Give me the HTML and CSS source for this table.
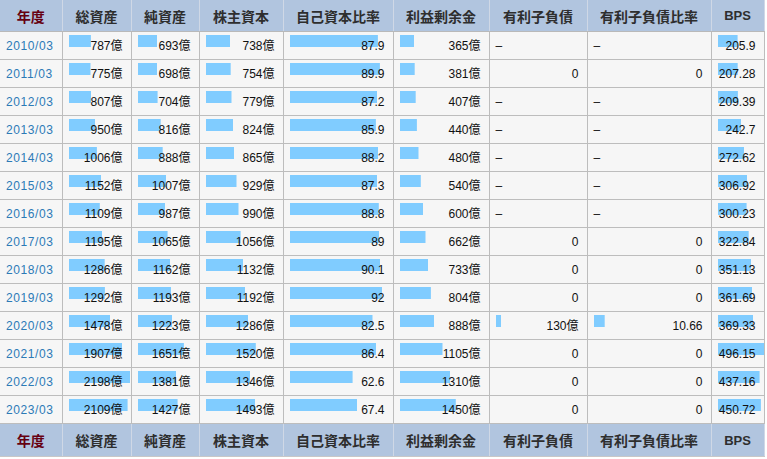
FILE: index.html
```html
<!DOCTYPE html>
<html lang="ja">
<head>
<meta charset="utf-8">
<title>財務推移</title>
<link rel="stylesheet" href="styles.css">
</head>
<body>
<table class="fin">
<colgroup>
<col class="c-year"><col class="c-ta"><col class="c-na"><col class="c-eq"><col class="c-ratio"><col class="c-re"><col class="c-debt"><col class="c-dr"><col class="c-bps">
</colgroup>
<thead>
<tr><th class="h-year">年度</th><th>総資産</th><th>純資産</th><th>株主資本</th><th>自己資本比率</th><th>利益剰余金</th><th>有利子負債</th><th>有利子負債比率</th><th class="h-bps">BPS</th></tr>
</thead>
<tbody>
<tr><td class="year"><a href="#">2010/03</a></td><td class="bar" style="--w:21.9px">787億</td><td class="bar" style="--w:19.3px">693億</td><td class="bar" style="--w:24.2px">738億</td><td class="bar" style="--w:87.9px">87.9</td><td class="bar" style="--w:14px">365億</td><td class="dash">–</td><td class="dash">–</td><td class="bar" style="--w:19.6px">205.9</td></tr>
<tr><td class="year"><a href="#">2011/03</a></td><td class="bar" style="--w:21.5px">775億</td><td class="bar" style="--w:19.4px">698億</td><td class="bar" style="--w:24.7px">754億</td><td class="bar" style="--w:89.9px">89.9</td><td class="bar" style="--w:14.7px">381億</td><td class="num">0</td><td class="num">0</td><td class="bar" style="--w:19.7px">207.28</td></tr>
<tr><td class="year"><a href="#">2012/03</a></td><td class="bar" style="--w:22.4px">807億</td><td class="bar" style="--w:19.6px">704億</td><td class="bar" style="--w:25.5px">779億</td><td class="bar" style="--w:87.2px">87.2</td><td class="bar" style="--w:15.7px">407億</td><td class="dash">–</td><td class="dash">–</td><td class="bar" style="--w:19.9px">209.39</td></tr>
<tr><td class="year"><a href="#">2013/03</a></td><td class="bar" style="--w:26.4px">950億</td><td class="bar" style="--w:22.7px">816億</td><td class="bar" style="--w:27px">824億</td><td class="bar" style="--w:85.9px">85.9</td><td class="bar" style="--w:16.9px">440億</td><td class="dash">–</td><td class="dash">–</td><td class="bar" style="--w:23.1px">242.7</td></tr>
<tr><td class="year"><a href="#">2014/03</a></td><td class="bar" style="--w:27.9px">1006億</td><td class="bar" style="--w:24.7px">888億</td><td class="bar" style="--w:28.4px">865億</td><td class="bar" style="--w:88.2px">88.2</td><td class="bar" style="--w:18.5px">480億</td><td class="dash">–</td><td class="dash">–</td><td class="bar" style="--w:26px">272.62</td></tr>
<tr><td class="year"><a href="#">2015/03</a></td><td class="bar" style="--w:32px">1152億</td><td class="bar" style="--w:28px">1007億</td><td class="bar" style="--w:30.5px">929億</td><td class="bar" style="--w:87.3px">87.3</td><td class="bar" style="--w:20.8px">540億</td><td class="dash">–</td><td class="dash">–</td><td class="bar" style="--w:29.2px">306.92</td></tr>
<tr><td class="year"><a href="#">2016/03</a></td><td class="bar" style="--w:30.8px">1109億</td><td class="bar" style="--w:27.4px">987億</td><td class="bar" style="--w:32.5px">990億</td><td class="bar" style="--w:88.8px">88.8</td><td class="bar" style="--w:23.1px">600億</td><td class="dash">–</td><td class="dash">–</td><td class="bar" style="--w:28.6px">300.23</td></tr>
<tr><td class="year"><a href="#">2017/03</a></td><td class="bar" style="--w:33.2px">1195億</td><td class="bar" style="--w:29.6px">1065億</td><td class="bar" style="--w:34.6px">1056億</td><td class="bar" style="--w:89px">89</td><td class="bar" style="--w:25.5px">662億</td><td class="num">0</td><td class="num">0</td><td class="bar" style="--w:30.7px">322.84</td></tr>
<tr><td class="year"><a href="#">2018/03</a></td><td class="bar" style="--w:35.7px">1286億</td><td class="bar" style="--w:32.3px">1162億</td><td class="bar" style="--w:37.1px">1132億</td><td class="bar" style="--w:90.1px">90.1</td><td class="bar" style="--w:28.2px">733億</td><td class="num">0</td><td class="num">0</td><td class="bar" style="--w:33.4px">351.13</td></tr>
<tr><td class="year"><a href="#">2019/03</a></td><td class="bar" style="--w:35.9px">1292億</td><td class="bar" style="--w:33.1px">1193億</td><td class="bar" style="--w:39.1px">1192億</td><td class="bar" style="--w:92px">92</td><td class="bar" style="--w:30.9px">804億</td><td class="num">0</td><td class="num">0</td><td class="bar" style="--w:34.4px">361.69</td></tr>
<tr><td class="year"><a href="#">2020/03</a></td><td class="bar" style="--w:41.1px">1478億</td><td class="bar" style="--w:34px">1223億</td><td class="bar" style="--w:42.2px">1286億</td><td class="bar" style="--w:82.5px">82.5</td><td class="bar" style="--w:34.2px">888億</td><td class="bar" style="--w:5px">130億</td><td class="bar" style="--w:10.7px">10.66</td><td class="bar" style="--w:35.2px">369.33</td></tr>
<tr><td class="year"><a href="#">2021/03</a></td><td class="bar" style="--w:53px">1907億</td><td class="bar" style="--w:45.9px">1651億</td><td class="bar" style="--w:49.8px">1520億</td><td class="bar" style="--w:86.4px">86.4</td><td class="bar" style="--w:42.5px">1105億</td><td class="num">0</td><td class="num">0</td><td class="bar" style="--w:47.3px">496.15</td></tr>
<tr><td class="year"><a href="#">2022/03</a></td><td class="bar" style="--w:61.1px">2198億</td><td class="bar" style="--w:38.4px">1381億</td><td class="bar" style="--w:44.1px">1346億</td><td class="bar" style="--w:62.6px">62.6</td><td class="bar" style="--w:50.4px">1310億</td><td class="num">0</td><td class="num">0</td><td class="bar" style="--w:41.6px">437.16</td></tr>
<tr><td class="year"><a href="#">2023/03</a></td><td class="bar" style="--w:58.6px">2109億</td><td class="bar" style="--w:39.6px">1427億</td><td class="bar" style="--w:49px">1493億</td><td class="bar" style="--w:67.4px">67.4</td><td class="bar" style="--w:55.8px">1450億</td><td class="num">0</td><td class="num">0</td><td class="bar" style="--w:42.9px">450.72</td></tr>
</tbody>
<tfoot>
<tr><th class="h-year">年度</th><th>総資産</th><th>純資産</th><th>株主資本</th><th>自己資本比率</th><th>利益剰余金</th><th>有利子負債</th><th>有利子負債比率</th><th class="h-bps">BPS</th></tr>
</tfoot>
</table>
</body>
</html>
```
FILE: styles.css
```css
html, body {
  margin: 0;
  padding: 0;
  background: #ffffff;
}

.fin {
  border-collapse: collapse;
  table-layout: fixed;
  width: 764px;
  font-family: "Liberation Sans", "Noto Sans CJK JP", sans-serif;
  font-size: 12px;
  color: #111;
}

.c-year { width: 62px; }
.c-ta { width: 69px; }
.c-na { width: 68px; }
.c-eq { width: 84px; }
.c-ratio { width: 110px; }
.c-re { width: 96px; }
.c-debt { width: 98px; }
.c-dr { width: 124px; }
.c-bps { width: 53px; }

.fin th {
  background: #b1c5df;
  color: #2e2e2e;
  font-family: "Noto Sans CJK JP", sans-serif;
  font-size: 14px;
  font-weight: bold;
  text-align: center;
  padding: 0;
  border-left: 1px solid #cfd8e6;
  border-right: 1px solid #cfd8e6;
}

.fin thead th {
  height: 31px;
  border-bottom: 1px solid #b9b9b9;
}

.fin tfoot th {
  height: 32px;
  border-top: 1px solid #b9b9b9;
  border-bottom: 1px solid #c8c8c8;
}

.fin th.h-year {
  color: #660011;
  border-left: none;
}

.fin th.h-bps {
  font-family: "Liberation Sans", sans-serif;
  font-size: 13px;
}

.fin td {
  height: 27px;
  padding: 0 8px 0 6px;
  background-color: #f6f6f6;
  border: 1px solid #bdbdbd;
  text-align: right;
  white-space: nowrap;
  line-height: 14px;
}

.fin td.year {
  border-left: none;
  text-align: left;
  padding-left: 6px;
}

.year a {
  color: #2c7ab6;
  text-decoration: none;
  letter-spacing: 0.6px;
}

.fin td.bar {
  background-image: linear-gradient(#80ccff, #80ccff);
  background-repeat: no-repeat;
  background-position: 6px 3px;
  background-size: var(--w) 12px;
}

.fin td.dash {
  text-align: left;
}
```
